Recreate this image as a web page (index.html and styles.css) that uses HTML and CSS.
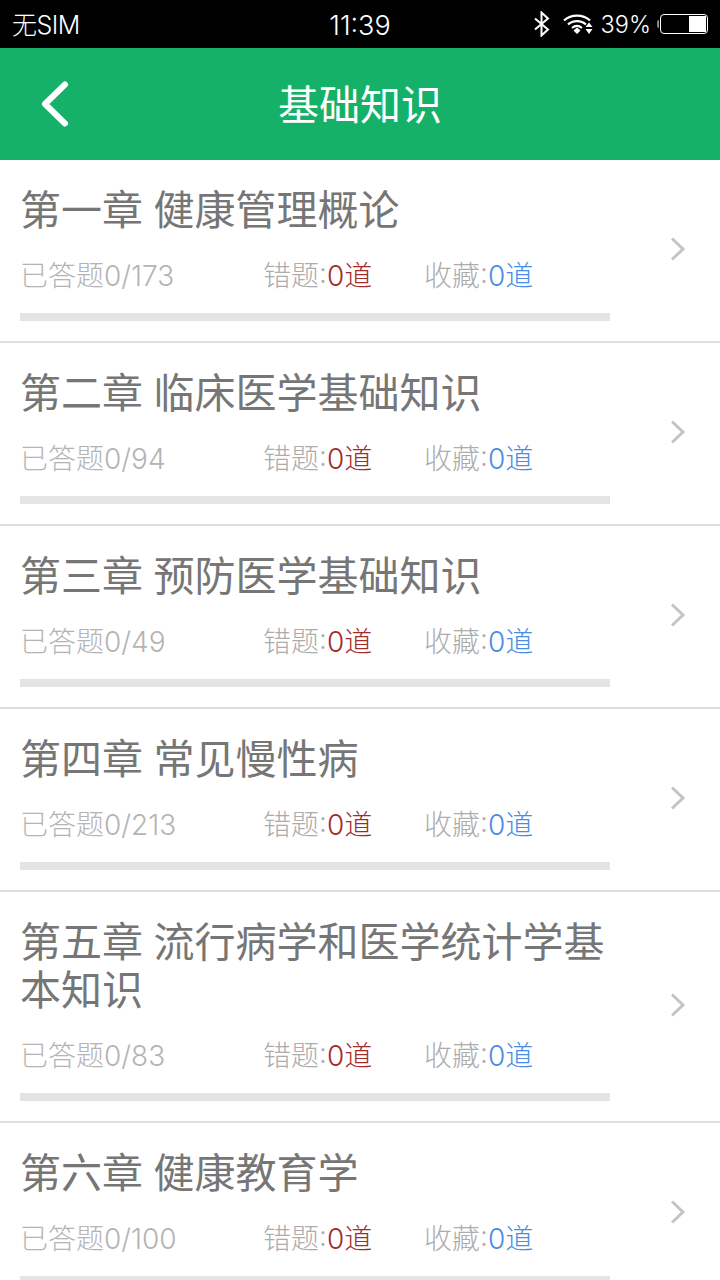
FILE: index.html
```html
<!DOCTYPE html>
<html lang="zh-CN">
<head>
<meta charset="utf-8">
<title>基础知识</title>
<link rel="stylesheet" href="styles.css">
</head>
<body>
<div class="status">
  <span class="carrier">无SIM</span>
  <span class="clock">11:39</span>
  <div class="status-right">
    <svg class="bt" width="18" height="26" viewBox="0 0 18 26"><path d="M2 7.500 15 18.500 8.500 24.500V1.500L15 7.500 2 18.500" fill="none" stroke="#fff" stroke-width="2"/></svg>
    <svg class="wifi" width="32" height="22" viewBox="0 0 32 22"><path d="M1 7.500C8 1 20 1 27 7.500M5 11.500C10 7 18 7 23 11.500M9 15C12 12.500 16 12.500 19 15" fill="none" stroke="#fff" stroke-width="2.200"/><path d="M10.500 17.500 14 14.500 17.500 17.500 14 21zM26 9.500 29.500 14H22.500zM26 21 22.500 16H29.500z" fill="#fff"/></svg>
    <span class="pct">39%</span>
    <div class="battery"><div class="battery-fill"></div></div>
  </div>
</div>
<header class="nav">
  <svg class="back" width="30" height="46" viewBox="0 0 30 46"><path d="M25 3.500 5 23 25 42.500" fill="none" stroke="#fff" stroke-width="6" stroke-linecap="round" stroke-linejoin="round"/></svg>
  <h1 class="nav-title">基础知识</h1>
</header>
<main class="list">
  <section class="row">
    <div class="body">
      <h2 class="title">第一章 健康管理概论</h2>
      <div class="meta"><span class="answered">已答题0/173</span><span class="wrong">错题:<b class="red">0道</b></span><span class="fav">收藏:<b class="blue">0道</b></span></div>
      <div class="bar"></div>
    </div>
    <svg class="chev" width="16" height="24" viewBox="0 0 16 24"><path d="M2 1.500 13 12 2 22.500" fill="none" stroke="#c4c4c6" stroke-width="3"/></svg>
  </section>
  <section class="row">
    <div class="body">
      <h2 class="title">第二章 临床医学基础知识</h2>
      <div class="meta"><span class="answered">已答题0/94</span><span class="wrong">错题:<b class="red">0道</b></span><span class="fav">收藏:<b class="blue">0道</b></span></div>
      <div class="bar"></div>
    </div>
    <svg class="chev" width="16" height="24" viewBox="0 0 16 24"><path d="M2 1.500 13 12 2 22.500" fill="none" stroke="#c4c4c6" stroke-width="3"/></svg>
  </section>
  <section class="row">
    <div class="body">
      <h2 class="title">第三章 预防医学基础知识</h2>
      <div class="meta"><span class="answered">已答题0/49</span><span class="wrong">错题:<b class="red">0道</b></span><span class="fav">收藏:<b class="blue">0道</b></span></div>
      <div class="bar"></div>
    </div>
    <svg class="chev" width="16" height="24" viewBox="0 0 16 24"><path d="M2 1.500 13 12 2 22.500" fill="none" stroke="#c4c4c6" stroke-width="3"/></svg>
  </section>
  <section class="row">
    <div class="body">
      <h2 class="title">第四章 常见慢性病</h2>
      <div class="meta"><span class="answered">已答题0/213</span><span class="wrong">错题:<b class="red">0道</b></span><span class="fav">收藏:<b class="blue">0道</b></span></div>
      <div class="bar"></div>
    </div>
    <svg class="chev" width="16" height="24" viewBox="0 0 16 24"><path d="M2 1.500 13 12 2 22.500" fill="none" stroke="#c4c4c6" stroke-width="3"/></svg>
  </section>
  <section class="row">
    <div class="body">
      <h2 class="title">第五章 流行病学和医学统计学基本知识</h2>
      <div class="meta"><span class="answered">已答题0/83</span><span class="wrong">错题:<b class="red">0道</b></span><span class="fav">收藏:<b class="blue">0道</b></span></div>
      <div class="bar"></div>
    </div>
    <svg class="chev" width="16" height="24" viewBox="0 0 16 24"><path d="M2 1.500 13 12 2 22.500" fill="none" stroke="#c4c4c6" stroke-width="3"/></svg>
  </section>
  <section class="row">
    <div class="body">
      <h2 class="title">第六章 健康教育学</h2>
      <div class="meta"><span class="answered">已答题0/100</span><span class="wrong">错题:<b class="red">0道</b></span><span class="fav">收藏:<b class="blue">0道</b></span></div>
      <div class="bar"></div>
    </div>
    <svg class="chev" width="16" height="24" viewBox="0 0 16 24"><path d="M2 1.500 13 12 2 22.500" fill="none" stroke="#c4c4c6" stroke-width="3"/></svg>
  </section>
</main>
</body>
</html>
```
FILE: styles.css
```css
* { box-sizing: border-box; }
html, body { margin: 0; padding: 0; }
body {
  width: 720px;
  height: 1280px;
  overflow: hidden;
  background: #fff;
  font-family: "Inter", "Noto Sans CJK SC", sans-serif;
}
.status {
  height: 48px;
  background: #000;
  color: #fff;
  display: grid;
  grid-template-columns: 1fr auto 1fr;
  align-items: center;
  padding: 3px 12px 0;
  font-size: 26px;
}
.carrier { font-size: 25px; letter-spacing: -0.5px; font-weight: 300; margin-top: -6px; }
.clock { font-size: 27px; font-weight: 300; }
.status-right { display: flex; align-items: center; justify-content: flex-end; margin-top: -3px; }
.bt { margin-right: 12px; }
.wifi { margin-right: 6px; }
.pct { font-size: 23.5px; font-weight: 300; margin-right: 9px; }
.battery {
  position: relative;
  width: 48px;
  height: 20px;
  border: 1px solid #fff;
  border-radius: 4px;
  padding: 1px;
  display: flex;
  justify-content: flex-end;
}
.battery::before {
  content: "";
  position: absolute;
  left: -4px;
  top: 5px;
  width: 2px;
  height: 8px;
  background: #8a8a8a;
  border-radius: 2px 0 0 2px;
}
.battery-fill { width: 17px; background: #fff; }
.nav {
  height: 112px;
  background: #15b168;
  display: flex;
  align-items: center;
  justify-content: center;
  position: relative;
  padding-bottom: 4px;
}
.back { position: absolute; left: 40px; top: 33px; }
.nav-title {
  margin: 0;
  color: #fff;
  font-size: 41px;
  font-weight: 400;
  font-family: "Noto Sans CJK SC", sans-serif;
  line-height: 48px;
}
.row {
  display: flex;
  align-items: center;
  border-bottom: 2px solid #dedede;
  padding: 23px 0 20px 20px;
}
.body { width: 590px; }
.title {
  margin: 0;
  font-size: 41px;
  line-height: 48px;
  font-weight: 400;
  color: #767676;
  font-family: "Noto Sans CJK SC", sans-serif;
  word-spacing: 1.4px;
}
.meta {
  display: flex;
  margin-top: 26px;
  height: 38px;
  line-height: 38px;
  font-size: 28px;
  font-weight: 300;
  color: #acacac;
}
.answered { width: 243px; color: #b4b4b4; }
.wrong { width: 161px; }
.red { color: #a02c2c; font-weight: 300; }
.blue { color: #4a8ce4; font-weight: 300; }
.bar { height: 8px; margin-top: 18px; background: #e4e4e4; }
.chev { margin: 0 0 6px 60px; flex: none; }
```
